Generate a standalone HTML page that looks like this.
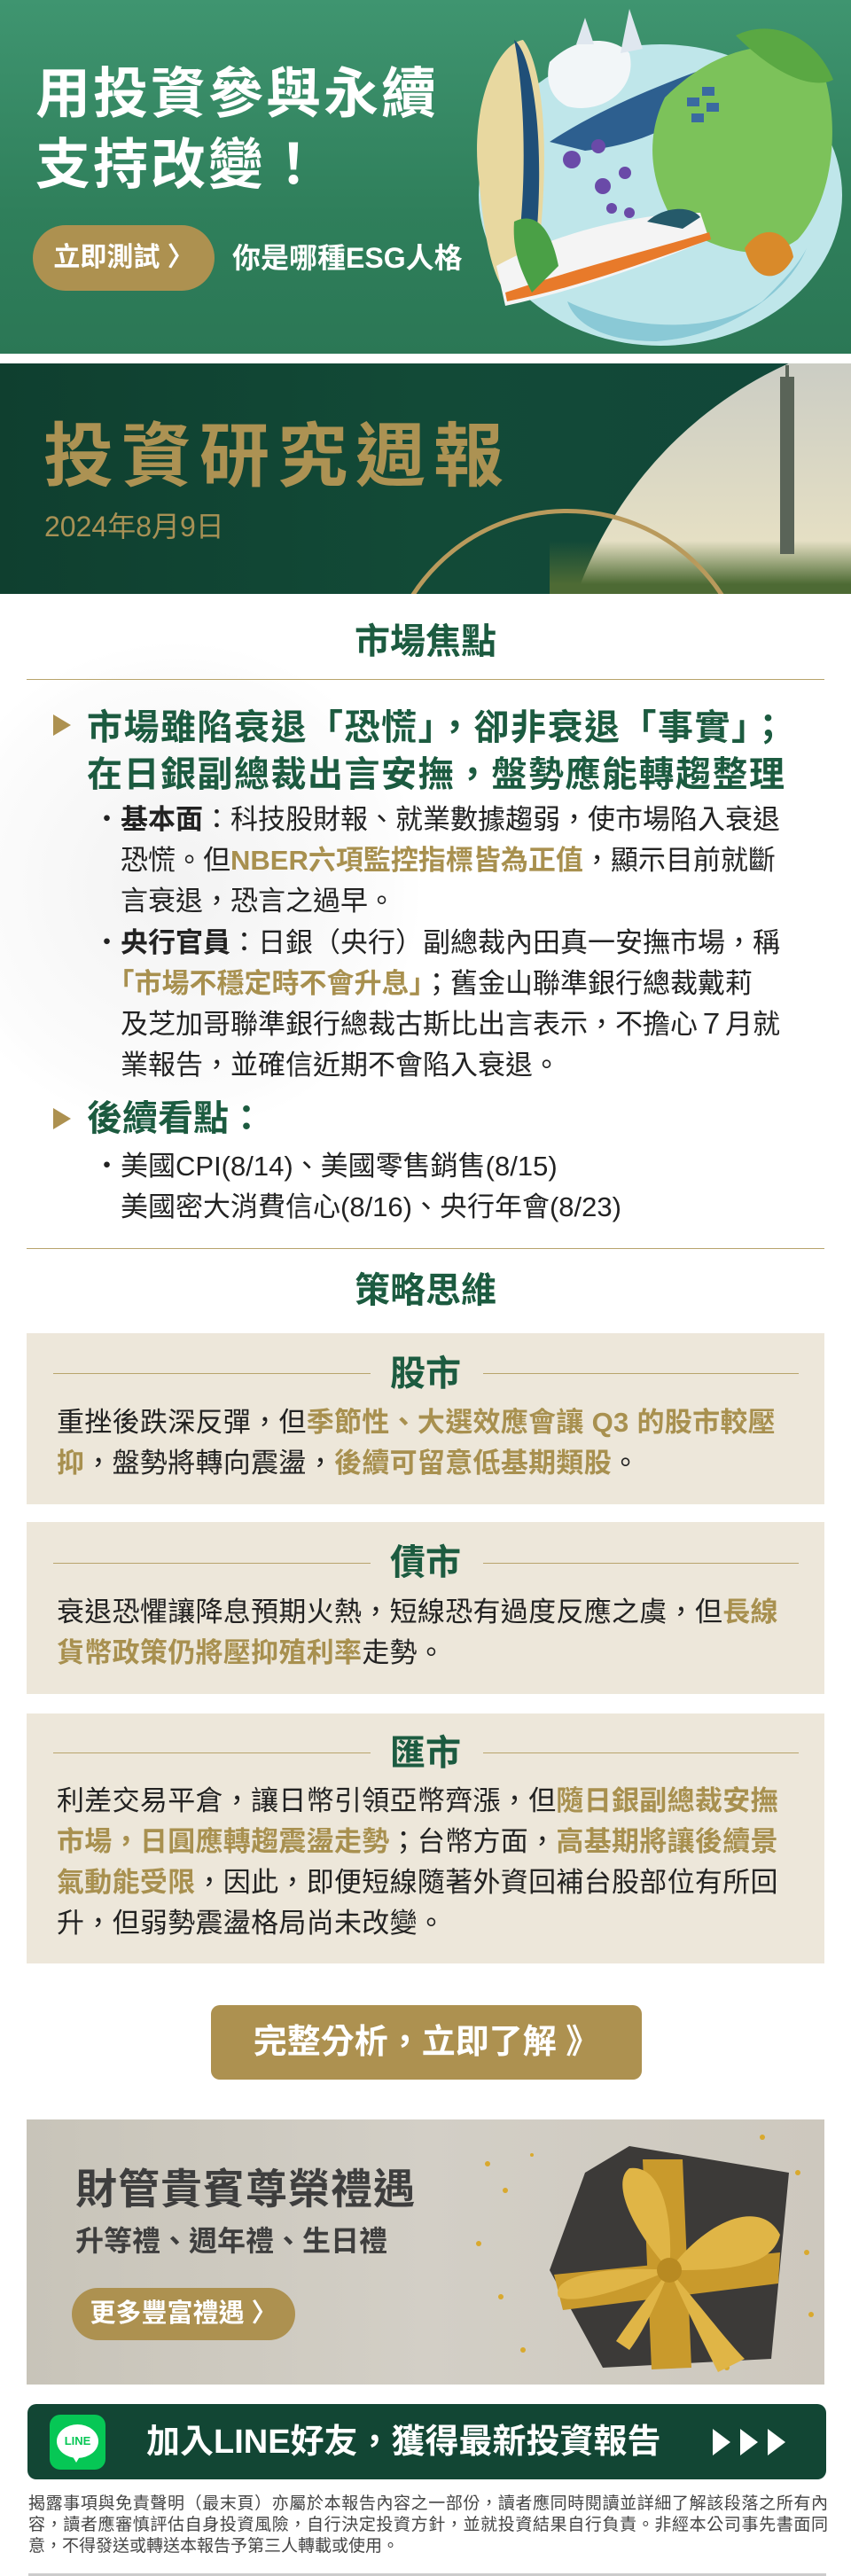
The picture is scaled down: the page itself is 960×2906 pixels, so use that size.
<!DOCTYPE html>
<html><head><meta charset="utf-8">
<style>
*{margin:0;padding:0;box-sizing:border-box}
body{width:960px;height:2906px;background:#fff;font-family:"Liberation Sans","Noto Sans CJK TC",sans-serif;position:relative;overflow:hidden}
.a{position:absolute}
.g{color:#1c5b40}
.gold{color:#a8904f}
.t{white-space:nowrap}
</style></head><body>

<!-- Banner 1 -->
<div class="a" style="left:0;top:0;width:960px;height:399px;background:linear-gradient(180deg,#3f9570 0%,#2f7f5b 60%,#2b7755 100%);overflow:hidden">
  <svg class="a" style="left:500px;top:0" width="460" height="399" viewBox="0 0 460 399">
    <ellipse cx="245" cy="220" rx="205" ry="170" fill="#bfe6ea"/>
    <path d="M40 200 C30 120 60 50 90 45 C110 70 120 150 110 260 C100 320 80 340 70 330 C50 300 45 250 40 200Z" fill="#e8d8a0"/>
    <path d="M80 45 C100 60 115 150 105 270 C100 320 90 340 75 335 C95 250 95 120 80 45Z" fill="#1f4f78"/>
    <path d="M120 160 C180 120 260 90 315 70 C300 120 250 160 160 170Z" fill="#2d5f8f"/>
    <path d="M250 110 C300 60 360 40 420 60 C450 120 445 220 400 270 C360 300 300 280 260 250 C230 200 230 150 250 110Z" fill="#7cc25a"/>
    <path d="M330 40 C370 20 420 40 440 90 C420 100 380 90 330 40Z" fill="#5aa843"/>
    <path d="M120 70 C150 40 190 40 210 60 C220 100 180 130 140 120 C120 110 115 90 120 70Z" fill="#f2f6f8"/>
    <path d="M200 60 L210 10 L225 55Z M150 50 L160 20 L170 50Z" fill="#dfe7ef"/>
    <path d="M60 300 C150 250 250 240 290 240 L300 270 C230 300 140 330 70 345Z" fill="#f4f4f4"/>
    <path d="M70 330 C160 300 240 280 300 262 L302 270 C230 295 150 325 72 340Z" fill="#e87a2a"/>
    <path d="M230 250 C250 232 280 232 290 245 L270 258Z" fill="#255a6a"/>
    <path d="M80 250 C100 240 120 250 130 300 L100 330 C85 300 78 280 80 250Z" fill="#4aa046"/>
    <path d="M140 340 C200 370 300 380 360 340 C380 320 400 300 410 280 C390 330 320 380 240 385 C190 385 150 370 140 340Z" fill="#8ac9d6"/>
    <path d="M340 280 C360 250 390 260 395 290 C380 320 350 320 340 280Z" fill="#d98a2a"/>
    <g fill="#6a4aa8"><circle cx="145" cy="180" r="10"/><circle cx="175" cy="165" r="8"/><circle cx="180" cy="210" r="9"/><circle cx="205" cy="195" r="7"/><circle cx="190" cy="235" r="6"/><circle cx="210" cy="240" r="6"/></g>
    <g fill="#3a6aa0"><rect x="275" y="110" width="14" height="10"/><rect x="292" y="98" width="14" height="10"/><rect x="280" y="128" width="14" height="10"/><rect x="297" y="116" width="14" height="10"/></g>
  </svg>
  <div class="a t" style="left:40px;top:67px;font-size:62px;font-weight:bold;color:#fff;line-height:80px;letter-spacing:3px">用投資參與永續<br>支持改變！</div>
  <div class="a t" style="left:37px;top:254px;width:205px;height:74px;border-radius:37px;background:#ad9150;color:#fff;font-size:30px;font-weight:bold;line-height:74px;text-align:center">立即測試 〉</div>
  <div class="a t" style="left:262px;top:270px;font-size:32px;color:#fff;font-weight:bold;line-height:42px">你是哪種ESG人格</div>
</div>

<!-- Banner 2 -->
<div class="a" style="left:0;top:410px;width:960px;height:260px;background:linear-gradient(90deg,#0f3f2f 0%,#124a37 50%,#11473a 100%);overflow:hidden">
  <div class="a" style="left:625px;top:-40px;width:900px;height:900px;border-radius:50%;background:linear-gradient(180deg,#c6c9c4 0%,#e9e2c4 30%,#efe6c2 45%,#cfc4a4 60%,#9a9480 80%,#55683f 95%)"></div>
  <div class="a" style="left:620px;top:200px;width:400px;height:70px;background:linear-gradient(180deg,rgba(90,110,60,0),#4d6a34 70%)"></div>
  <div class="a" style="left:880px;top:15px;width:16px;height:200px;background:#5a6458"></div>
  <div class="a" style="left:886px;top:2px;width:4px;height:20px;background:#5a6458"></div>
  <div class="a" style="left:430px;top:164px;width:420px;height:420px;border-radius:50%;border:5px solid #b99a5c"></div>
  <div class="a t" style="left:49px;top:60px;font-size:79px;font-weight:bold;color:#ac9253;letter-spacing:9px;line-height:90px">投資研究週報</div>
  <div class="a t" style="left:50px;top:164px;font-size:32px;color:#a89155;line-height:40px">2024年8月9日</div>
</div>

<!-- background faint globe -->
<div class="a" style="left:-80px;top:720px;width:560px;height:560px;border-radius:50%;background:radial-gradient(circle,rgba(230,230,230,0.5),rgba(240,240,240,0.2) 60%,rgba(255,255,255,0) 70%)"></div>

<!-- Market focus -->
<div class="a t g" style="left:0;top:700px;width:960px;text-align:center;font-size:40px;font-weight:bold;line-height:48px">市場焦點</div>
<div class="a" style="left:30px;top:766px;width:900px;height:1px;background:#b8a46c"></div>

<div class="a" style="left:60px;top:806px;width:0;height:0;border-left:20px solid #ad9150;border-top:12px solid transparent;border-bottom:12px solid transparent"></div>
<div class="a t g" style="left:98px;top:795px;font-size:40px;font-weight:bold;line-height:53px;letter-spacing:1.5px">市場雖陷衰退「恐慌」，卻非衰退「事實」；<br>在日銀副總裁出言安撫，盤勢應能轉趨整理</div>

<div class="a t" style="left:105px;top:902px;font-size:31px;color:#222;line-height:46px">・<b>基本面</b>：科技股財報、就業數據趨弱，使市場陷入衰退<br>　恐慌。但<b class="gold">NBER六項監控指標皆為正值</b>，顯示目前就斷<br>　言衰退，恐言之過早。</div>
<div class="a t" style="left:105px;top:1041px;font-size:31px;color:#222;line-height:46px">・<b>央行官員</b>：日銀（央行）副總裁內田真一安撫市場，稱<br>　<b class="gold">「市場不穩定時不會升息」</b>；舊金山聯準銀行總裁戴莉<br>　及芝加哥聯準銀行總裁古斯比出言表示，不擔心７月就<br>　業報告，並確信近期不會陷入衰退。</div>

<div class="a" style="left:60px;top:1250px;width:0;height:0;border-left:20px solid #ad9150;border-top:12px solid transparent;border-bottom:12px solid transparent"></div>
<div class="a t g" style="left:98px;top:1236px;font-size:40px;font-weight:bold;line-height:53px">後續看點：</div>
<div class="a t" style="left:105px;top:1293px;font-size:31px;color:#222;line-height:46px">・美國CPI(8/14)、美國零售銷售(8/15)<br>　美國密大消費信心(8/16)、央行年會(8/23)</div>
<div class="a" style="left:30px;top:1408px;width:900px;height:1px;background:#b8a46c"></div>

<div class="a t g" style="left:0;top:1432px;width:960px;text-align:center;font-size:40px;font-weight:bold;line-height:48px">策略思維</div>

<!-- Boxes -->
<div class="a" style="left:30px;top:1504px;width:900px;height:193px;background:#ede7da"></div>
<div class="a" style="left:60px;top:1549px;width:358px;height:1px;background:#b8a46c"></div>
<div class="a" style="left:545px;top:1549px;width:356px;height:1px;background:#b8a46c"></div>
<div class="a t g" style="left:0;top:1526px;width:960px;text-align:center;font-size:40px;font-weight:bold;line-height:48px">股市</div>
<div class="a t" style="left:64px;top:1582px;font-size:31px;color:#222;line-height:46px;letter-spacing:0.3px">重挫後跌深反彈，但<b class="gold">季節性、大選效應會讓 Q3 的股市較壓</b><br><b class="gold">抑</b>，盤勢將轉向震盪，<b class="gold">後續可留意低基期類股</b>。</div>

<div class="a" style="left:30px;top:1717px;width:900px;height:194px;background:#ede7da"></div>
<div class="a" style="left:60px;top:1763px;width:358px;height:1px;background:#b8a46c"></div>
<div class="a" style="left:545px;top:1763px;width:356px;height:1px;background:#b8a46c"></div>
<div class="a t g" style="left:0;top:1739px;width:960px;text-align:center;font-size:40px;font-weight:bold;line-height:48px">債市</div>
<div class="a t" style="left:64px;top:1796px;font-size:31px;color:#222;line-height:46px;letter-spacing:0.3px">衰退恐懼讓降息預期火熱，短線恐有過度反應之虞，但<b class="gold">長線</b><br><b class="gold">貨幣政策仍將壓抑殖利率</b>走勢。</div>

<div class="a" style="left:30px;top:1933px;width:900px;height:282px;background:#ede7da"></div>
<div class="a" style="left:60px;top:1977px;width:358px;height:1px;background:#b8a46c"></div>
<div class="a" style="left:545px;top:1977px;width:356px;height:1px;background:#b8a46c"></div>
<div class="a t g" style="left:0;top:1954px;width:960px;text-align:center;font-size:40px;font-weight:bold;line-height:48px">匯市</div>
<div class="a t" style="left:64px;top:2009px;font-size:31px;color:#222;line-height:46px;letter-spacing:0.3px">利差交易平倉，讓日幣引領亞幣齊漲，但<b class="gold">隨日銀副總裁安撫</b><br><b class="gold">市場，日圓應轉趨震盪走勢</b>；台幣方面，<b class="gold">高基期將讓後續景</b><br><b class="gold">氣動能受限</b>，因此，即便短線隨著外資回補台股部位有所回<br>升，但弱勢震盪格局尚未改變。</div>

<!-- CTA -->
<div class="a t" style="left:238px;top:2262px;width:486px;height:84px;border-radius:10px;background:#ad9150;color:#fff;font-size:38px;font-weight:bold;line-height:84px;text-align:center">完整分析，立即了解 》</div>

<!-- Gift banner -->
<div class="a" style="left:30px;top:2391px;width:900px;height:299px;background:linear-gradient(90deg,#c8c4b9,#d3cfc6 50%,#cdc8be);overflow:hidden">
  <svg class="a" style="left:480px;top:0" width="420" height="299" viewBox="0 0 420 299">
    <g fill="#d9a92e"><circle cx="40" cy="50" r="3"/><circle cx="60" cy="80" r="3"/><circle cx="30" cy="140" r="3"/><circle cx="55" cy="200" r="3"/><circle cx="80" cy="260" r="3"/><circle cx="350" cy="20" r="3"/><circle cx="390" cy="60" r="3"/><circle cx="400" cy="150" r="3"/><circle cx="405" cy="220" r="3"/><circle cx="310" cy="280" r="3"/><circle cx="90" cy="40" r="2"/></g>
    <path d="M200 30 L380 60 L360 270 L170 280 L110 170 L150 60Z" fill="#3c3a38"/>
    <path d="M215 45 L260 45 L270 280 L225 282Z" fill="#c99a2c"/>
    <path d="M115 175 L370 150 L368 185 L125 215Z" fill="#c99a2c"/>
    <path d="M245 170 C200 120 180 70 200 55 C240 50 250 120 245 170Z M245 170 C290 110 350 90 370 130 C360 170 300 170 245 170Z M245 170 C200 190 140 210 120 200 C110 175 180 165 245 170Z M245 170 C280 210 310 250 330 270 L300 285 C280 245 260 205 245 170Z M245 170 C230 210 215 240 200 260 L185 250 C205 220 225 195 245 170Z" fill="#e0b546"/>
    <circle cx="245" cy="170" r="14" fill="#b88a22"/>
  </svg>
  <div class="a t" style="left:55px;top:50px;font-size:47px;font-weight:bold;color:#3e3e3e;line-height:58px;letter-spacing:1px">財管貴賓尊榮禮遇</div>
  <div class="a t" style="left:55px;top:117px;font-size:32px;font-weight:bold;color:#3e3e3e;line-height:40px">升等禮、週年禮、生日禮</div>
  <div class="a t" style="left:51px;top:190px;width:252px;height:59px;border-radius:30px;background:#ad9150;color:#fff;font-size:29px;font-weight:bold;line-height:59px;text-align:center">更多豐富禮遇 〉</div>
</div>

<!-- LINE bar -->
<div class="a" style="left:31px;top:2712px;width:901px;height:85px;border-radius:10px;background:#124634"></div>
<div class="a" style="left:56px;top:2724px;width:63px;height:62px;border-radius:12px;background:#06c755"></div>
<div class="a" style="left:64px;top:2735px;width:47px;height:38px;border-radius:50%;background:#fff"></div>
<div class="a" style="left:80px;top:2768px;width:0;height:0;border-left:6px solid transparent;border-right:6px solid transparent;border-top:10px solid #fff"></div>
<div class="a t" style="left:64px;top:2745px;width:47px;text-align:center;font-size:13px;font-weight:bold;color:#06c755;line-height:18px">LINE</div>
<div class="a t" style="left:165px;top:2730px;font-size:38px;font-weight:bold;color:#fff;line-height:50px">加入LINE好友，獲得最新投資報告</div>
<svg class="a" style="left:802px;top:2738px" width="88" height="34" viewBox="0 0 88 34"><path d="M2 2 L22 17 L2 32Z M33 2 L53 17 L33 32Z M64 2 L84 17 L64 32Z" fill="#fff"/></svg>

<!-- Disclaimer -->
<div class="a" style="left:32px;top:2813px;width:902px;font-size:19px;color:#444;line-height:24px;text-align:justify">揭露事項與免責聲明（最末頁）亦屬於本報告內容之一部份，讀者應同時閱讀並詳細了解該段落之所有內容，讀者應審慎評估自身投資風險，自行決定投資方針，並就投資結果自行負責。非經本公司事先書面同意，不得發送或轉送本報告予第三人轉載或使用。</div>
<div class="a" style="left:32px;top:2903px;width:900px;height:3px;background:#ccc"></div>
</body></html>
